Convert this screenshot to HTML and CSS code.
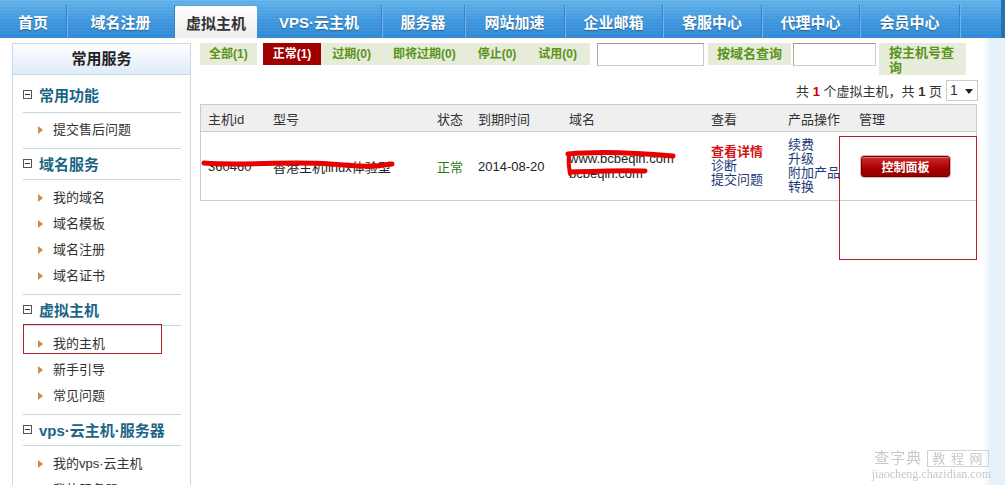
FILE: index.html
```html
<!DOCTYPE html>
<html lang="zh-CN">
<head>
  <meta charset="UTF-8" />
  <title>虚拟主机管理</title>
  <link rel="stylesheet" href="styles.css">
</head>
<body>

<div class="topnav">
  <a class="tab">首页</a>
  <a class="tab">域名注册</a>
  <a class="tab active">虚拟主机</a>
  <a class="tab">VPS·云主机</a>
  <a class="tab">服务器</a>
  <a class="tab">网站加速</a>
  <a class="tab">企业邮箱</a>
  <a class="tab">客服中心</a>
  <a class="tab">代理中心</a>
  <a class="tab">会员中心</a>
  <a class="tab"></a>
</div>

<div class="page">
  <div class="sidebar">
    <div class="side-head">常用服务</div>

    <div class="group first">
      <div class="group-title"><span class="minus"></span>常用功能</div>
      <ul>
        <li>提交售后问题</li>
      </ul>
    </div>

    <div class="group">
      <div class="group-title"><span class="minus"></span>域名服务</div>
      <ul>
        <li>我的域名</li>
        <li>域名模板</li>
        <li>域名注册</li>
        <li>域名证书</li>
      </ul>
    </div>

    <div class="group">
      <div class="group-title"><span class="minus"></span>虚拟主机</div>
      <ul>
        <li class="marked">我的主机</li>
        <li>新手引导</li>
        <li>常见问题</li>
      </ul>
    </div>

    <div class="group">
      <div class="group-title"><span class="minus"></span>vps·云主机·服务器</div>
      <ul>
        <li>我的vps·云主机</li>
        <li>我的服务器</li>
      </ul>
    </div>
  </div>

  <div class="main">
    <div class="filters">
      <a class="filter">全部(1)</a>
      <a class="filter current">正常(1)</a>
      <a class="filter">过期(0)</a>
      <a class="filter">即将过期(0)</a>
      <a class="filter">停止(0)</a>
      <a class="filter last">试用(0)</a>
      <input class="search" type="text">
      <a class="filter query">按域名查询</a>
      <input class="search short" type="text">
      <a class="filter query narrow">按主机号查询</a>
    </div>

    <div class="pager">
      <span class="pager-text">共 <b class="red">1</b> 个虚拟主机，共 <b>1</b> 页</span>
      <span class="select">1 <i class="caret"></i></span>
    </div>

    <div class="table-wrap">
      <table class="hosts">
        <thead>
          <tr>
            <th class="c-id">主机id</th>
            <th class="c-type">型号</th>
            <th class="c-state">状态</th>
            <th class="c-date">到期时间</th>
            <th class="c-domain">域名</th>
            <th class="c-view">查看</th>
            <th class="c-ops">产品操作</th>
            <th class="c-manage">管理</th>
          </tr>
        </thead>
        <tbody>
          <tr>
            <td>360460</td>
            <td>香港主机linux体验型</td>
            <td class="ok">正常</td>
            <td>2014-08-20</td>
            <td>www.bcbeqin.com<br>bcbeqin.com</td>
            <td class="links"><a class="hot">查看详情</a><a>诊断</a><a>提交问题</a></td>
            <td class="links"><a>续费</a><a>升级</a><a>附加产品</a><a>转换</a></td>
            <td><button class="panel">控制面板</button></td>
          </tr>
        </tbody>
      </table>

      <svg class="scribble" width="480" height="80" viewBox="0 0 480 80">
        <path d="M4 59 C40 62 90 57 130 60 S 170 63 192 60" stroke="#e60000" stroke-width="5" fill="none" stroke-linecap="round"/>
        <path d="M368 50 C400 47 440 49 473 52" stroke="#e60000" stroke-width="5" fill="none" stroke-linecap="round"/>
        <path d="M369 52 C368 58 369 63 370 70" stroke="#e60000" stroke-width="4" fill="none" stroke-linecap="round"/>
        <path d="M371 68 C400 67 425 66 445 67" stroke="#e60000" stroke-width="5" fill="none" stroke-linecap="round"/>
      </svg>
      <div class="callout"></div>
    </div>
  </div>

  <div class="edge"></div>
</div>

<div class="stamp">
  <div class="stamp-top">查字典 <span>教 程 网</span></div>
  <div class="stamp-url">jiaocheng.chazidian.com</div>
</div>

</body>
</html>
```

FILE: styles.css
```css
body {
  margin: 0;
  padding: 0;
  font-family: "Liberation Sans", "Noto Sans CJK SC", sans-serif;
  font-size: 13px;
  color: #333;
  background: #fff;
  overflow: hidden;
}

a { cursor: pointer; }

/* top navigation */
.topnav {
  display: grid;
  grid-template-columns: 67px 108px 82px 125px 83px 100px 98px 99px 98px 100px 1fr;
  height: 38px;
  background: repeating-linear-gradient(to bottom, rgba(255,255,255,0.06) 0 1px, rgba(0,0,0,0) 1px 3px),
              linear-gradient(to bottom, #62b2ea 0%, #3e97dd 55%, #2f88d6 100%);
  border-right: 4px solid #2a6fae;
}

.tab {
  display: flex;
  align-items: center;
  justify-content: center;
  margin-top: 5px;
  color: #fff;
  font-weight: bold;
  font-size: 15px;
  text-shadow: 0 1px 1px rgba(0,0,0,0.35);
  border-right: 1px solid #3582c8;
  box-shadow: 1px 0 0 #6eb6ea;
}

.tab.active {
  margin-top: 6px;
  background: linear-gradient(to bottom, #ffffff, #ececec);
  color: #333;
  text-shadow: none;
  border-radius: 2px 2px 0 0;
  border-right: none;
  box-shadow: none;
}

.tab:last-child { border-right: none; box-shadow: none; }

/* page */
.page {
  display: flex;
  align-items: flex-start;
}

.sidebar {
  width: 177px;
  margin: 5px 0 0 12px;
  border: 1px solid #c9d9e5;
  border-bottom: none;
  min-height: 460px;
}

.side-head {
  height: 30px;
  line-height: 30px;
  text-align: center;
  font-size: 15px;
  font-weight: bold;
  color: #222;
  background: linear-gradient(to bottom, #ffffff, #dfeaf8);
  border-bottom: 1px solid #c9d9e5;
}

.group-title {
  height: 28px;
  padding-bottom: 2px;
  margin: 0 9px 0 10px;
  border-bottom: 1px solid #c8d6de;
  font-size: 15px;
  font-weight: bold;
  color: #1b6486;
  display: flex;
  align-items: center;
}

.group.first .group-title {
  height: 31px;
  padding-top: 4px;
}

.minus {
  width: 7px;
  height: 7px;
  border: 1px solid #555;
  margin-right: 7px;
  position: relative;
}

.minus::after {
  content: "";
  position: absolute;
  left: 1px;
  right: 1px;
  top: 3px;
  height: 1px;
  background: #333;
}

.group ul {
  list-style: none;
  margin: 0 9px 0 10px;
  padding: 5px 0;
  border-bottom: 1px solid #c8d6de;
}

.group.first ul { padding: 4px 0 5px; }

.group ul li {
  height: 26px;
  line-height: 26px;
  padding-left: 30px;
  font-size: 13px;
  color: #333;
  position: relative;
}

.group ul li::before {
  content: "";
  position: absolute;
  left: 15px;
  top: 9px;
  border-left: 5px solid #d08a4a;
  border-top: 4px solid transparent;
  border-bottom: 4px solid transparent;
}

.group ul li.marked::after {
  content: "";
  position: absolute;
  left: 0;
  top: -7px;
  width: 137px;
  height: 28px;
  border: 1px solid #b3202c;
}

/* main area */
.main {
  width: 778px;
  margin: 5px 0 0 9px;
}

.filters {
  display: flex;
  align-items: flex-start;
}

.filter {
  height: 22px;
  line-height: 22px;
  padding: 0 11px;
  background: #e6ebda;
  color: #5a9318;
  font-weight: bold;
  font-size: 12px;
}

.filter:first-child { padding: 0 9px; }

.filter.current {
  background: #a00000;
  color: #fff;
  margin-left: 6px;
  padding: 0 10px;
}

.filter.last { padding-right: 13px; }

.search {
  box-sizing: border-box;
  width: 107px;
  height: 23px;
  margin: 0 4px 0 7px;
  padding: 0;
  border: 1px solid #ccc;
  border-top-color: #999;
  border-left-color: #aaa;
}

.search.short {
  width: 83px;
  margin: 0 3px 0 2px;
}

.filter.query {
  font-size: 13px;
  padding: 0 9px;
}

.filter.narrow {
  width: 68px;
  height: 30px;
  line-height: 15px;
  padding: 2px 9px 0 10px;
  white-space: normal;
  word-break: break-all;
}

.pager {
  display: flex;
  justify-content: flex-end;
  align-items: center;
  height: 22px;
  margin-top: 4px;
  font-size: 13px;
  color: #333;
}

.pager b { font-size: 13px; }
.pager .red { color: #c00; }

.select {
  box-sizing: border-box;
  width: 32px;
  height: 21px;
  line-height: 19px;
  margin-left: 4px;
  border: 1px solid #ccc;
  font-size: 14px;
  padding-left: 3px;
  position: relative;
}

.caret {
  position: absolute;
  right: 4px;
  top: 8px;
  border-top: 5px solid #222;
  border-left: 4px solid transparent;
  border-right: 4px solid transparent;
}

.table-wrap {
  position: relative;
  margin-top: 3px;
}

.hosts {
  width: 777px;
  border-collapse: collapse;
  border: 1px solid #ccc;
  table-layout: fixed;
}

.hosts th {
  height: 26px;
  background: #efefef;
  font-weight: normal;
  text-align: left;
  padding: 0 0 0 7px;
  font-size: 13px;
  color: #333;
  border-bottom: 1px solid #ccc;
}

.hosts td {
  height: 68px;
  padding: 0 0 0 7px;
  font-size: 13px;
  color: #222;
  vertical-align: middle;
}

.c-id { width: 58px; }
.c-type { width: 157px; }
.c-state { width: 34px; }
.c-date { width: 84px; }
.c-domain { width: 135px; }
.c-view { width: 70px; }
.c-ops { width: 64px; }

.hosts td.ok { color: #2a7a1a; }

.links a {
  display: block;
  line-height: 14px;
  color: #1d3a78;
}

.links a.hot {
  color: #d21414;
  font-weight: bold;
}

.panel {
  margin-left: 2px;
  width: 89px;
  height: 21px;
  padding: 0;
  border: 1px solid #6a0000;
  border-radius: 3px;
  background: linear-gradient(to bottom, #d22a2a, #a80000 60%, #900000);
  box-shadow: inset 0 1px 0 rgba(255,255,255,0.35), 0 0 0 1px #e8b0b0;
  color: #fff;
  font-family: "Noto Sans CJK SC", sans-serif;
  font-weight: bold;
  font-size: 12px;
  cursor: pointer;
}

.scribble {
  position: absolute;
  left: 0;
  top: 0;
  pointer-events: none;
}

.callout {
  position: absolute;
  left: 639px;
  top: 32px;
  width: 136px;
  height: 122px;
  border: 1px solid #b3202c;
}

.edge {
  flex: 1;
  height: 447px;
  margin-left: 5px;
  background: linear-gradient(to right, #ffffff, #e4eff9 40%, #e9f2fb);
}

/* corner stamp */
.stamp {
  position: fixed;
  right: 14px;
  bottom: 3px;
  text-align: center;
  color: #c8c8c8;
}

.stamp-top {
  font-size: 15px;
  letter-spacing: 1px;
}

.stamp-top span {
  border: 1px solid #d2d2d2;
  padding: 0 4px;
  font-size: 13px;
}

.stamp-url {
  font-family: "Liberation Serif", serif;
  font-size: 12px;
}
```
